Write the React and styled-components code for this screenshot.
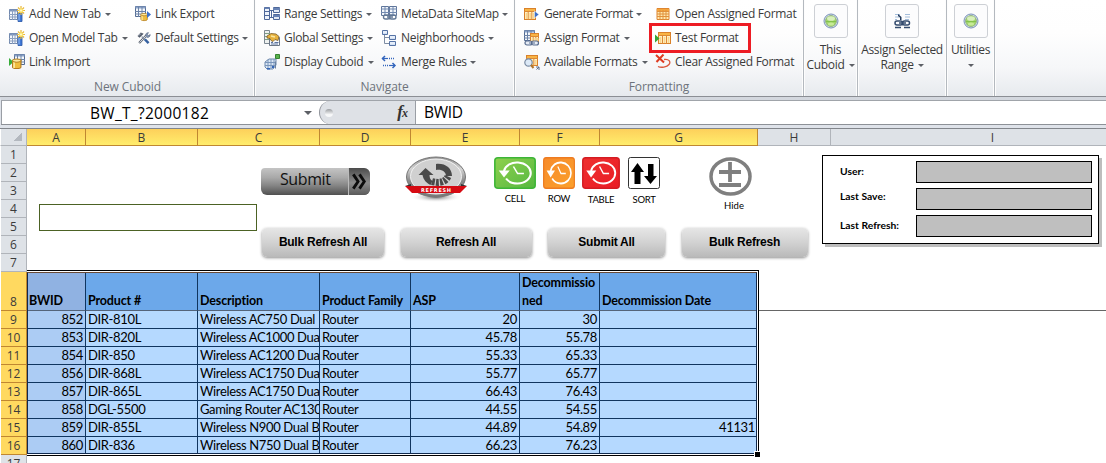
import React from "react";
import styled, { createGlobalStyle, css } from "styled-components";

const Global = createGlobalStyle`
  *, *::before, *::after { box-sizing: border-box; }
  body { margin: 0; background: #fff; overflow: hidden; }
`;

const UI = '"Open Sans", "Noto Sans", sans-serif';
const CELL = 'Lato, "Open Sans", sans-serif';

const Window = styled.div`
  width: 1106px;
  height: 463px;
  overflow: hidden;
  display: flex;
  flex-direction: column;
  background: #fff;
  font-family: ${UI};
  color: #3b3b3b;
`;

/* ---------- ribbon ---------- */
const Ribbon = styled.div`
  height: 97px;
  flex: none;
  display: flex;
  padding-left: 1px;
  background: linear-gradient(#ffffff 0, #fefefe 35%, #f6f7f9 70%, #e7eaee 100%);
  border-bottom: 1px solid #8b8e94;
`;
const Group = styled.div`
  width: ${(p) => p.$w}px;
  flex: none;
  display: flex;
  flex-direction: column;
  border-right: 1px solid #b4b9bf;
  box-shadow: inset -1px 0 #fdfdfd, 1px 0 #fdfdfd;
`;
const Commands = styled.div`
  display: flex;
  padding: 2px 0 0 ${(p) => p.$pad}px;
  height: 76px;
`;
const Stack = styled.div`
  width: ${(p) => p.$w}px;
  flex: none;
`;
const Command = styled.div`
  height: 24px;
  display: flex;
  align-items: center;
  svg { flex: none; display: block; }
`;
const Label = styled.span`
  width: ${(p) => p.$w}px;
  margin-left: ${(p) => p.$gap ?? 4}px;
  font-size: 12px;
  letter-spacing: ${(p) => p.$ls ?? -0.3}px;
  line-height: 20px;
  white-space: nowrap;
`;
const Caret = styled.i`
  flex: none;
  display: inline-block;
  margin-left: ${(p) => p.$gap ?? 4}px;
  border: ${(p) => p.$size ?? 3}px solid transparent;
  border-top-color: #5d6066;
  border-bottom: 0;
  vertical-align: middle;
`;
const Highlight = styled(Command)`
  position: relative;
  &::after {
    content: "";
    position: absolute;
    left: -6px;
    top: -3px;
    width: 102px;
    height: 30px;
    border: 3px solid #ed1c24;
  }
`;
const GroupTitle = styled.div`
  height: 19px;
  line-height: 21px;
  font-size: 12px;
  letter-spacing: -0.1px;
  text-align: center;
  color: #6d737b;
`;
const BigButton = styled.div`
  display: flex;
  flex-direction: column;
  align-items: center;
  padding-top: 4px;
  font-size: 12px;
  line-height: 14.500px;
  letter-spacing: -0.3px;
  text-align: center;
  white-space: nowrap;
`;
const BigIcon = styled.div`
  width: 34px;
  height: 34px;
  margin-bottom: 5px;
  display: grid;
  place-items: center;
  border: 1px solid #cdd0d5;
  border-radius: 3px;
  background: #fcfcfd;
`;

/* ---------- ribbon icons ---------- */
const Icon = ({ w = 16, children }) => (
  <svg width={w} height="16" viewBox={`0 0 ${w} 16`}>{children}</svg>
);
const Star = () => (
  <g>
    <path d="M12 0v9M8 4.500h8M9 1.500l6 6M15 1.500l-6 6" stroke="#e9b83a" strokeWidth="1.200" />
    <circle cx="12" cy="4.500" r="2.300" fill="#fbe36c" />
    <circle cx="12" cy="4.500" r="1" fill="#fffbd0" />
  </g>
);
const AddTabIcon = () => (
  <Icon>
    <path d="M.5 3.500h8v10h-8z" fill="#f5f8fc" stroke="#6f86ab" />
    <path d="M.5 3.500h8v2h-8z" fill="#7d95bd" />
    <path d="M3.500 4v10M6 4v10M0 8.500h9M0 11h9" stroke="#8ca0c0" />
    <path d="M9 7h4v8.500H9z" fill="#3f78d6" stroke="#2754a5" strokeWidth=".8" />
    <path d="M10 8v6.500" stroke="#9fc4f7" />
    <Star />
  </Icon>
);
const Grid = ({ x = 0, y = 0 }) => (
  <g transform={`translate(${x} ${y})`}>
    <path d="M.5.5h10v10H.5z" fill="#f4f7fb" stroke="#536b92" />
    <path d="M.5.5h10v2H.5z" fill="#8ba3c9" />
    <path d="M3.500 1v10M7 1v10M0 5.500h11M0 8h11" stroke="#6c83a8" />
  </g>
);
const Cylinder = ({ x, y, s = 1 }) => (
  <g transform={`translate(${x} ${y}) scale(${s})`}>
    <path d="M.5 2v6c0 2 8 2 8 0V2z" fill="#f0bd3e" stroke="#b47b1b" />
    <path d="M2 3v6" stroke="#fdeba6" strokeWidth="1.500" />
    <ellipse cx="4.500" cy="2" rx="4" ry="1.500" fill="#fce9a1" stroke="#b98422" />
  </g>
);
const LinkImportIcon = () => (
  <Icon>
    <Grid x={5} y={0} />
    <path d="M0 4l4.500 4L0 12z" fill="#38ac3a" />
    <Cylinder x={3} y={4.5} s={1.05} />
  </Icon>
);
const LinkExportIcon = () => (
  <Icon>
    <Grid x={0} y={0} />
    <Cylinder x={5.5} y={7} s={0.8} />
    <path d="M12 5l4 3.500-4 3.500z" fill="#3a70cb" />
  </Icon>
);
const ToolsIcon = () => (
  <Icon>
    <g transform="translate(2.500 2) scale(.82)">
      <path d="M2 13.500L11 4" stroke="#59606c" strokeWidth="2.800" />
      <path d="M2.500 13L11 4" stroke="#dfe6f0" strokeWidth="1.200" />
      <path d="M10 5c-.5-3 1.500-4.500 3.500-4.200l-1.500 2 1.500 1.500 2-1.200c.3 2.700-2.500 4.200-4.500 3.200" fill="#8496b3" stroke="#4e5e7a" strokeWidth=".7" />
      <path d="M5 5.500l4 4" stroke="#8d99ac" strokeWidth="1.500" />
      <path d="M9 9l4.500 4.500" stroke="#35609f" strokeWidth="3" />
      <path d="M0 5l4-4.500 3.500 1.500L2.500 7z" fill="#525b6a" />
      <path d="M1.500 4.500L4 2" stroke="#c9d2df" />
    </g>
  </Icon>
);
const RangeIcon = () => (
  <Icon>
    <path d="M.5 1.500h5v12h-5z" fill="#eef3fa" stroke="#4e689a" />
    <path d="M0 5.500h6M0 9.500h6" stroke="#4e689a" />
    <path d="M.5 1.500h5v1.500h-5z" fill="#6883b5" />
    <path d="M6 4.500h3M6 11.500h3M7.500 4v8" stroke="#4e689a" />
    <path d="M9.500 1.500h6v5h-6zM9.500 8.500h6v5h-6z" fill="#e3ebf7" stroke="#4e689a" />
    <path d="M9 3h7M9 10h7" stroke="#6883b5" strokeWidth="2" />
  </Icon>
);
const GlobalIcon = () => (
  <Icon>
    <path d="M.5.500h5v13h-5z" fill="#eef1ef" stroke="#7c8892" />
    <path d="M1 3.500h5M1 6.500h5M1 9.500h5" stroke="#7fa083" strokeWidth="1.200" />
    <path d="M5.500 7.500h10v8h-10z" fill="#f7f9fc" stroke="#6b7686" />
    <path d="M7 12.500h2M7 14h7M10.500 12.500h4" stroke="#5d74a0" />
    <path d="M3 6l4-2.500 5 .500 3 2.500-1 4-3-1-2 2-2-1-1-2-3-.500z" fill="#e6b13d" stroke="#785c2a" strokeWidth=".8" />
    <path d="M7 6l4 1" stroke="#fbe7a0" strokeWidth="1.300" />
  </Icon>
);
const DisplayIcon = () => (
  <Icon>
    <path d="M1 8l4-3h7v6l-3 4H3l-2-2z" fill="#dbe7f5" stroke="#6d88ad" />
    <path d="M1 8.500h10M1 11.500h10M4 5.500v9M7 5v10M10 5v8" stroke="#7b96bb" />
    <path d="M3 14h3v1.500H3zM8 12h2v2H8z" fill="#3466b8" />
    <path d="M11.500.500h4v4h-4z" fill="#59b34d" stroke="#378332" />
    <path d="M11.500 14.500v-7" stroke="#6a819f" />
  </Icon>
);
const SiteMapIcon = () => (
  <Icon w={17}>
    <path d="M.5.500h7v9h-7zM8.500.500h7v9h-7z" fill="#f2f6fb" stroke="#60769b" />
    <path d="M0 3h16M0 6.500h16M4 1v9M12 1v9" stroke="#7189b0" />
    <path d="M3 9h3.500a2 2 0 0 1 0 4H4.500a2 2 0 0 1 0-4M9 9h4a2 2 0 0 1 0 4h-2.500a2 2 0 0 1 0-4M6 11h6" fill="none" stroke="#627896" strokeWidth="1.400" />
  </Icon>
);
const NeighborIcon = () => (
  <Icon w={17}>
    <path d="M3.500 5v8.500h5M3.500 7.500h5" fill="none" stroke="#7e8da3" />
    <path d="M1.500.500h5v4h-5zM8.500 5.500h6v4h-6zM8.500 11.500h6v4h-6z" fill="#d4e1f4" stroke="#5673a5" />
    <path d="M2 2h4M9 7h5M9 13h5" stroke="#f8fbff" />
  </Icon>
);
const MergeIcon = () => (
  <Icon w={17}>
    <path d="M1 4.500h6" stroke="#3466bd" strokeWidth="1.200" />
    <path d="M8 4.500h5" stroke="#3466bd" strokeWidth="1.500" strokeDasharray="1 1" />
    <path d="M4 2L1.500 4.500 4 7" fill="none" stroke="#3466bd" strokeWidth="1.500" />
    <path d="M8 11.500h6" stroke="#3466bd" strokeWidth="1.200" />
    <path d="M2 11.500h5" stroke="#3466bd" strokeWidth="1.500" strokeDasharray="1 1" />
    <path d="M11.500 9l2.500 2.500-2.500 2.500" fill="none" stroke="#3466bd" strokeWidth="1.500" />
  </Icon>
);
const OrangeTable = ({ x = 0, y = 0, w = 12, h = 11 }) => (
  <g transform={`translate(${x} ${y})`}>
    <rect x=".5" y=".5" width={w} height={h} fill="#fff1c8" stroke="#d9812a" />
    <rect x="1" y="1" width={w - 1} height="2.500" fill="#f8b445" />
    <path d={`M0 3.500h${w + 1}M${w / 3 + 0.5} 3v${h - 2}M${(2 * w) / 3 + 0.5} 3v${h - 2}`} stroke="#dd8a35" />
    <path d={`M2.500 5v${h - 5}M${w / 3 + 2.5} 5v${h - 5}M${(2 * w) / 3 + 2.5} 5v${h - 5}`} stroke="#fbd68a" strokeWidth="1.500" />
  </g>
);
const GenerateIcon = () => (
  <Icon>
    <OrangeTable y={2} w={11} />
    <path d="M10.500 5v7l4.500-3.500z" fill="#3d70c9" stroke="#fff" strokeWidth=".5" />
  </Icon>
);
const AssignFmtIcon = () => (
  <Icon>
    <Grid x={0} y={0} />
    <OrangeTable x={6} y={3} w={8} h={8} />
    <path d="M3 11h3a2 2 0 0 1 0 4H3a2 2 0 0 1 0-4M9.500 11h3a2 2 0 0 1 0 4h-3a2 2 0 0 1 0-4M5 13h6" fill="#e6ecf5" stroke="#596d8f" strokeWidth="1.200" />
  </Icon>
);
const AvailableIcon = () => (
  <Icon>
    <OrangeTable x={2} y={1} w={11} h={10} />
    <circle cx="4.500" cy="8.500" r="3.700" fill="#dce9f7" stroke="#7b8ca4" strokeWidth="1.200" />
    <path d="M7 11l2.500 3" stroke="#b2762c" strokeWidth="2" />
    <path d="M12 13h3v3M12.500 15.500L15 13" stroke="#5d6e8b" fill="none" />
  </Icon>
);
const OpenFmtIcon = () => (
  <Icon>
    <path d="M2 2.500h12v11H2z" fill="#ffe9b0" stroke="#de8530" />
    <path d="M2 3h12v2H2z" fill="#f5a53c" />
    <path d="M2 5.500h12M2 8h12M2 10.500h12M5 4v10M8 4v10M11 4v10" stroke="#e1913c" />
  </Icon>
);
const TestFmtIcon = () => (
  <Icon>
    <OrangeTable x={3} y={2} w={12} />
    <path d="M0 4.500l4.500 4L0 12.500z" fill="#35a537" />
  </Icon>
);
const ClearFmtIcon = () => (
  <Icon>
    <path d="M1 1l8 7.500M8.500.500L1.500 8" stroke="#df3b22" strokeWidth="2" />
    <path d="M9 5.500c5-1 7 2.500 5 5-2 2.700-8 3.500-11 2" fill="none" stroke="#d9593f" strokeWidth="1.300" />
  </Icon>
);
const GreenOrb = () => (
  <svg width="16" height="16" viewBox="0 0 16 16">
    <circle cx="8" cy="8" r="7" fill="#dfe8f3" stroke="#7890b6" />
    <circle cx="8" cy="8" r="5.500" fill="#a3d66b" stroke="#87a77e" strokeWidth=".8" />
    <ellipse cx="8" cy="5.500" rx="4" ry="2.300" fill="#d9f0bd" />
    <ellipse cx="8" cy="11" rx="3" ry="1.500" fill="#c8ec97" />
    <path d="M3 8.500h10" stroke="#84c34c" />
  </svg>
);
const AssignRangeIcon = () => (
  <svg width="17" height="16" viewBox="0 0 17 16">
    <path d="M1 1.500h5M1 4h5M11 1.500h5M11 4h5M11 6.500h4M1 6.500h2" stroke="#a4bdda" />
    <path d="M4 1l3.500 3v3h-1.500V4.500L4 3z" fill="#223a5c" />
    <path d="M3 8h3.500a2 2 0 0 1 0 4h-3.500a2 2 0 0 1 0-4M10.500 8h3a2 2 0 0 1 0 4h-3a2 2 0 0 1 0-4M5 10h7" fill="none" stroke="#334b6e" strokeWidth="1.500" />
    <path d="M1 14.500h6M10 14.500h6" stroke="#334b6e" strokeWidth="1.500" />
  </svg>
);

/* ---------- formula bar ---------- */
const FormulaBar = styled.div`
  height: 31px;
  flex: none;
  display: flex;
  border: solid #dfe3ea;
  border-width: 3px 0 3px 1px;
  border-top-color: #d3d7de;
  box-shadow: inset 0 1px #a0a4aa, inset 0 -1px #8d9197;
  background: #fff;
  color: #000;
  font-size: 15.500px;
  line-height: 24px;
`;
const NameBox = styled.div`
  width: 318px;
  margin: 1px 0;
  border-left: 1px solid #9a9ea5;
  display: flex;
  align-items: center;
  padding-left: 88px;
`;
const NameText = styled.span`
  width: 210px;
  letter-spacing: 0.3px;
`;
const FxBar = styled.div`
  flex: none;
  width: 97px;
  height: 23px;
  margin: 1px 0;
  display: flex;
  align-items: center;
  justify-content: space-between;
  padding: 0 7px 0 5px;
  background: #dee1e6;
  border-left: 1px solid #8f939a;
  border-right: 1px solid #9a9ea5;
  border-radius: 12px 0 0 12px;
  font: italic 700 17px/20px "Liberation Serif", serif;
  color: #333;
  small { font-size: 12px; margin-left: -1px; }
`;
const Knob = styled.i`
  width: 8px;
  height: 8px;
  border-radius: 50%;
  background: linear-gradient(#9a9da1, #f7f8f9 70%);
`;
const FormulaText = styled.div`
  padding-left: 8px;
  letter-spacing: -0.3px;
`;

/* ---------- sheet ---------- */
const HeaderRow = styled.div`
  height: 18px;
  flex: none;
  display: flex;
  border-top: 1px solid #82868c;
`;
const Corner = styled.div`
  width: 27px;
  flex: none;
  display: flex;
  justify-content: flex-end;
  padding: 4px 4px 0 0;
  background: #dee2e7;
  border-right: 1px solid #b0b4ba;
  border-bottom: 1px solid #b0b4ba;
  border-left: 1px solid #fff;
  &::before {
    content: "";
    width: 8px;
    height: 8px;
    background: linear-gradient(135deg, transparent 50%, #b3b8bf 50%);
  }
`;
const picked = css`
  background: linear-gradient(#fdd05b, #ffed6c);
  border-color: #c08731;
`;
const ColHead = styled.div`
  width: ${(p) => p.$w}px;
  flex: none;
  font-size: 12px;
  line-height: 17px;
  text-align: center;
  background: #dee2e7;
  border: solid #b0b4ba;
  border-width: 0 1px 1px 0;
  ${(p) => p.$on && picked}
`;
const Body = styled.div`
  display: flex;
  height: 317px;
`;
const RowHeads = styled.div`
  width: 27px;
  flex: none;
  padding-left: 1px;
`;
const RowHead = styled.div`
  height: ${(p) => p.$h ?? 18}px;
  display: flex;
  align-items: flex-end;
  justify-content: center;
  font-size: 12px;
  line-height: 16px;
  background: #dee2e7;
  border: solid #b0b4ba;
  border-width: 0 1px 1px 0;
  ${(p) => p.$on && css`background: #ffd960; border-color: #c08731;`}
`;
const Sheet = styled.div`
  flex: 1;
  min-width: 0;
`;
const Shapes = styled.div`
  height: 124px;
  display: flex;
  align-items: flex-start;
`;
const NoteBox = styled.div`
  width: 218px;
  height: 27px;
  margin: 58px 4px 0 12px;
  border: 1px solid #4c6224;
`;
const Controls = styled.div`
  width: 561px;
  flex: none;
`;
const ShapeRow = styled.div`
  display: flex;
  align-items: flex-start;
  height: 82px;
`;
const Submit = styled.div`
  width: 109px;
  height: 27px;
  margin-top: 22px;
  display: flex;
  border-radius: 4px 6px 6px 6px;
  overflow: hidden;
  background: linear-gradient(#c4c4c4 0, #a9a9a9 35%, #858585 65%, #505050 100%);
  color: #111;
  font: 16px/23px ${UI};
  span { width: 87px; padding-left: 19px; letter-spacing: -0.400px; }
  svg { background: linear-gradient(#4b4b4b, #8c8c8c 55%, #5a5a5a); border-left: 1px solid #bbb; }
`;
const RefreshBadge = styled.svg`
  margin: 9px 0 0 34px;
  flex: none;
`;
const IconTile = styled.div`
  width: ${(p) => p.$w}px;
  margin: ${(p) => p.$top ?? 11}px 0 0 ${(p) => p.$ml}px;
  flex: none;
  display: flex;
  flex-direction: column;
  align-items: center;
  color: #000;
  font: 9.500px/12px ${CELL};
  letter-spacing: ${(p) => p.$ls ?? -0.3}px;
  svg { display: block; margin-bottom: ${(p) => p.$gap ?? 4}px; }
`;
const ButtonRow = styled.div`
  display: flex;
  padding-left: 1px;
  gap: 16.500px;
`;
const SheetButton = styled.div`
  width: ${(p) => p.$w}px;
  height: 29px;
  flex: none;
  border-radius: 5px;
  background: linear-gradient(#e6e6e6, #d2d2d2 50%, #b9b9b9);
  box-shadow: 0 1px 3px rgba(0, 0, 0, 0.45);
  color: #000;
  font: bold 12px/29px "Liberation Sans", sans-serif;
  letter-spacing: -0.25px;
  text-align: center;
  white-space: nowrap;
`;
const InfoCard = styled.div`
  width: 277px;
  height: 89px;
  margin-top: 9px;
  padding: 5px 6px 0 17px;
  border: 1px solid #000;
  background: #fff;
  box-shadow: 3px 3px 0 #bdbdbd;
  display: flex;
  flex-direction: column;
  gap: 5px;
`;
const InfoRow = styled.div`
  height: 22px;
  display: flex;
  justify-content: space-between;
  color: #000;
  font: bold 10.300px/${(p) => p.$lh ?? 20}px ${CELL};
`;
const InfoValue = styled.div`
  width: 176px;
  background: #bfbfbf;
  border: 1px solid #000;
`;

/* ---------- data range ---------- */
const Range = styled.div`
  position: relative;
  width: 732px;
  height: 186px;
  border: 1px solid #000;
  border-left: 0;
  padding: 1px 1px 1px 0;
  background: #fff;
  &::after {
    content: "";
    position: absolute;
    right: -2px;
    bottom: -2px;
    width: 5px;
    height: 5px;
    background: #000;
    box-shadow: 0 0 0 1px #fff;
  }
`;
const Inner = styled.div`
  height: 182px;
  overflow: hidden;
  border: 1px solid #10294d;
  border-top-color: #6a4a36;
`;
const Row = styled.div`
  display: flex;
  height: ${(p) => (p.$head ? 38 : 18)}px;
`;
const Cell = styled.div`
  width: ${(p) => p.$w}px;
  flex: none;
  overflow: hidden;
  white-space: nowrap;
  padding: 0 ${(p) => (p.$right ? 2 : 0)}px 0 ${(p) => (p.$first ? 1 : 2)}px;
  text-align: ${(p) => (p.$right ? "right" : "left")};
  color: #000;
  font: 13px/17px ${CELL};
  letter-spacing: ${(p) => p.$ls ?? -0.35}px;
  background: ${(p) => (p.$first ? "#acccf4" : "#b5d9ff")};
  border: solid #10355f;
  border-width: 0 1px 1px 0;
  &:last-child { border-right: 0; }
  ${(p) =>
    p.$head &&
    css`
      display: flex;
      align-items: flex-end;
      white-space: pre;
      font-weight: 700;
      font-size: 12.500px;
      line-height: 18px;
      letter-spacing: -0.15px;
      background: ${p.$first ? "#90b2e2" : "#6ca8ea"};
      border-bottom-color: #54647a;
    `}
`;
const FreezeLine = styled.div`
  position: absolute;
  left: 732px;
  top: 39px;
  width: 348px;
  height: 1px;
  background: #666;
`;

const Cmd = ({ icon: I, text, w, caret, gap, ls, frame }) => {
  const Wrap = frame ? Highlight : Command;
  return (
    <Wrap>
      <I />
      <Label $w={w} $gap={gap} $ls={ls}>{text}</Label>
      {caret && <Caret />}
    </Wrap>
  );
};

const ClockIcon = ({ w, h = 32, light, dark, edge, id }) => (
  <svg width={w} height={h} viewBox="0 0 40 32" preserveAspectRatio="none">
    <linearGradient id={id} x1="0" y1="0" x2="1" y2="1">
      <stop offset="0" stopColor={light} />
      <stop offset="1" stopColor={dark} />
    </linearGradient>
    <rect x=".8" y=".8" width="38.400" height="30.400" rx="3" fill={`url(#${id})`} stroke={edge} strokeWidth="1.500" />
    <path d="M9.500 14C11 8 17 5 23 5.500c7 .500 12 5 12 10.500s-5 10.500-12.500 10.500c-5 0-9-2-11-5" fill="none" stroke="#fff" strokeWidth="2" />
    <path d="M4.500 13.500l10.500 0-5.500 7z" fill="#fff" />
    <path d="M18.500 9.500l4 7h6" fill="none" stroke="#fff" strokeWidth="1.500" />
  </svg>
);

const columns = [
  ["A", 59], ["B", 112], ["C", 122], ["D", 91], ["E", 109], ["F", 80], ["G", 158], ["H", 73], ["I", 324],
];
const cellWidths = [58, 112, 122, 91, 109, 80, 157];
const heads = ["BWID", "Product #", "Description", "Product Family", "ASP", "Decommissio\nned", "Decommission Date"];
const rows = [
  ["852", "DIR-810L", "Wireless AC750 Dual", "Router", "20", "30", ""],
  ["853", "DIR-820L", "Wireless AC1000 Dua", "Router", "45.78", "55.78", ""],
  ["854", "DIR-850", "Wireless AC1200 Dua", "Router", "55.33", "65.33", ""],
  ["856", "DIR-868L", "Wireless AC1750 Dua", "Router", "55.77", "65.77", ""],
  ["857", "DIR-865L", "Wireless AC1750 Dua", "Router", "66.43", "76.43", ""],
  ["858", "DGL-5500", "Gaming Router AC130", "Router", "44.55", "54.55", ""],
  ["859", "DIR-855L", "Wireless N900 Dual B", "Router", "44.89", "54.89", "41131"],
  ["860", "DIR-836", "Wireless N750 Dual B", "Router", "66.23", "76.23", ""],
];

export default function App() {
  return (
    <Window>
      <Global />
      <Ribbon>
        <Group $w={254}>
          <Commands $pad={8}>
            <Stack $w={126}>
              <Cmd icon={AddTabIcon} text="Add New Tab" w={72} ls={-0.2} caret />
              <Cmd icon={AddTabIcon} text="Open Model Tab" w={89} caret />
              <Cmd icon={LinkImportIcon} text="Link Import" w={62} />
            </Stack>
            <Stack $w={118}>
              <Cmd icon={LinkExportIcon} text="Link Export" w={58} />
              <Cmd icon={ToolsIcon} text="Default Settings" w={83} caret />
            </Stack>
          </Commands>
          <GroupTitle>New Cuboid</GroupTitle>
        </Group>
        <Group $w={260}>
          <Commands $pad={9}>
            <Stack $w={117}>
              <Cmd icon={RangeIcon} text="Range Settings" w={78} caret />
              <Cmd icon={GlobalIcon} text="Global Settings" w={79} caret />
              <Cmd icon={DisplayIcon} text="Display Cuboid" w={80} caret />
            </Stack>
            <Stack $w={134}>
              <Cmd icon={SiteMapIcon} text="MetaData SiteMap" w={97} gap={3} ls={-0.35} caret />
              <Cmd icon={NeighborIcon} text="Neighborhoods" w={83} gap={3} caret />
              <Cmd icon={MergeIcon} text="Merge Rules" w={65} gap={3} caret />
            </Stack>
          </Commands>
          <GroupTitle>Navigate</GroupTitle>
        </Group>
        <Group $w={289}>
          <Commands $pad={9}>
            <Stack $w={131}>
              <Cmd icon={GenerateIcon} text="Generate Format" w={88} ls={-0.45} caret />
              <Cmd icon={AssignFmtIcon} text="Assign Format" w={76} ls={-0.3} caret />
              <Cmd icon={AvailableIcon} text="Available Formats" w={94} ls={-0.35} caret />
            </Stack>
            <Stack $w={146}>
              <Cmd icon={OpenFmtIcon} text="Open Assigned Format" w={122} />
              <Cmd icon={TestFmtIcon} text="Test Format" w={64} frame />
              <Cmd icon={ClearFmtIcon} text="Clear Assigned Format" w={122} />
            </Stack>
          </Commands>
          <GroupTitle>Formatting</GroupTitle>
        </Group>
        <Group $w={54}>
          <BigButton>
            <BigIcon><GreenOrb /></BigIcon>
            <div>This</div>
            <div>Cuboid<Caret /></div>
          </BigButton>
        </Group>
        <Group $w={89}>
          <BigButton>
            <BigIcon><AssignRangeIcon /></BigIcon>
            <div>Assign Selected</div>
            <div>Range<Caret /></div>
          </BigButton>
        </Group>
        <Group $w={48}>
          <BigButton>
            <BigIcon><GreenOrb /></BigIcon>
            <div>Utilities</div>
            <div><Caret $gap={0} /></div>
          </BigButton>
        </Group>
      </Ribbon>

      <FormulaBar>
        <NameBox>
          <NameText>BW_T_?2000182</NameText>
          <Caret $size={4} />
        </NameBox>
        <FxBar>
          <Knob />
          <span>f<small>x</small></span>
        </FxBar>
        <FormulaText>BWID</FormulaText>
      </FormulaBar>

      <HeaderRow>
        <Corner />
        {columns.map(([name, w], i) => (
          <ColHead key={name} $w={w} $on={i < 7}>{name}</ColHead>
        ))}
      </HeaderRow>

      <Body>
        <RowHeads>
          {Array.from({ length: 17 }, (_, i) => (
            <RowHead key={i} $h={i === 7 ? 39 : 18} $on={i > 6 && i < 16}>{i + 1}</RowHead>
          ))}
        </RowHeads>
        <Sheet>
          <Shapes>
            <NoteBox />
            <Controls>
              <ShapeRow>
                <Submit>
                  <span>Submit</span>
                  <svg width="22" height="27" viewBox="0 0 22 27">
                    <path d="M4.500 6l5 7.500-5 7.500M11 6l5 7.500-5 7.500" fill="none" stroke="#0c0c0c" strokeWidth="3" />
                  </svg>
                </Submit>
                <RefreshBadge width="64" height="48" viewBox="0 0 64 48">
                  <defs>
                    <linearGradient id="rim" x1="0" y1="0" x2="0" y2="1">
                      <stop offset="0" stopColor="#8d8d8d" />
                      <stop offset=".3" stopColor="#d5d5d5" />
                      <stop offset=".6" stopColor="#8a8a8a" />
                      <stop offset="1" stopColor="#787878" />
                    </linearGradient>
                    <radialGradient id="shade">
                      <stop offset="0" stopColor="#666" />
                      <stop offset="1" stopColor="#fff" stopOpacity="0" />
                    </radialGradient>
                  </defs>
                  <ellipse cx="32" cy="42" rx="26" ry="5.500" fill="url(#shade)" />
                  <ellipse cx="32" cy="22" rx="29.500" ry="20" fill="url(#rim)" stroke="#777" />
                  <ellipse cx="32" cy="21.500" rx="25.500" ry="17.500" fill="#d0d0d0" stroke="#f2f2f2" />
                  <path d="M32 9c9-1 16 4 16 12h-6c0-4-4-7-10-6z" fill="#4a4a4a" />
                  <path d="M21.500 13L14.500 20h4c1 5 4 8 8 10l2-4c-2-1-3-3-3-6h4z" fill="#4a4a4a" />
                  <path d="M28 26.500c7 2 13 1 16-5" fill="none" stroke="#4a4a4a" strokeWidth="7" strokeDasharray="2.800 1.200" />
                  <path d="M1 31h62l-7 7H8z" fill="#d60a12" />
                  <path d="M1 31l6-2v2zM63 31l-6-2v2z" fill="#333" />
                  <text x="17" y="36.500" fill="#fff" fontFamily="DejaVu Sans" fontWeight="700" fontSize="5" textLength="30">REFRESH</text>
                </RefreshBadge>
                <IconTile $w={42} $ml={26} $gap={4}>
                  <ClockIcon w={42} id="cell" light="#8fd04e" dark="#55b840" edge="#3db536" />
                  CELL
                </IconTile>
                <IconTile $w={32} $ml={7} $gap={4}>
                  <ClockIcon w={32} id="row" light="#f78b2b" dark="#fba02c" edge="#ee7b20" />
                  ROW
                </IconTile>
                <IconTile $w={38} $ml={7} $gap={5}>
                  <ClockIcon w={38} id="table" light="#ee3030" dark="#ea1c24" edge="#d41c22" />
                  TABLE
                </IconTile>
                <IconTile $w={32} $ml={8} $gap={5}>
                  <svg width="32" height="32" viewBox="0 0 32 32">
                    <rect x=".5" y=".5" width="31" height="31" rx="2" fill="#fff" stroke="#333" />
                    <path d="M9.500 6l6.500 9h-3.500v12h-6V15H3zM22.500 27l6.500-8h-3.500V7h-5.500v12H16z" fill="#000" />
                  </svg>
                  SORT
                </IconTile>
                <IconTile $w={44} $ml={48} $top={11} $gap={4} $ls={0}>
                  <svg width="44" height="39" viewBox="0 0 44 39">
                    <ellipse cx="22.500" cy="19.500" rx="19.500" ry="17.500" fill="none" stroke="#7f7f7f" strokeWidth="3.500" />
                    <path d="M22 5v20M11 15h22M11 28h22" stroke="#7f7f7f" strokeWidth="3.800" />
                  </svg>
                  <span style={{ paddingLeft: 8 }}>Hide</span>
                </IconTile>
              </ShapeRow>
              <ButtonRow>
                <SheetButton $w={122}>Bulk Refresh All</SheetButton>
                <SheetButton $w={131}>Refresh All</SheetButton>
                <SheetButton $w={117}>Submit All</SheetButton>
                <SheetButton $w={126}>Bulk Refresh</SheetButton>
              </ButtonRow>
            </Controls>
            <InfoCard>
              <InfoRow>User:<InfoValue /></InfoRow>
              <InfoRow $lh={17}>Last Save:<InfoValue /></InfoRow>
              <InfoRow>Last Refresh:<InfoValue /></InfoRow>
            </InfoCard>
          </Shapes>
          <Range>
            <Inner>
              <Row $head>
                {heads.map((h, i) => (
                  <Cell key={h} $head $first={i === 0} $w={cellWidths[i]}>{h}</Cell>
                ))}
              </Row>
              {rows.map((r) => (
                <Row key={r[0]}>
                  {r.map((v, i) => (
                    <Cell key={i} $first={i === 0} $right={i === 0 || i > 3} $w={cellWidths[i]}>{v}</Cell>
                  ))}
                </Row>
              ))}
            </Inner>
            <FreezeLine />
          </Range>
        </Sheet>
      </Body>
    </Window>
  );
}
